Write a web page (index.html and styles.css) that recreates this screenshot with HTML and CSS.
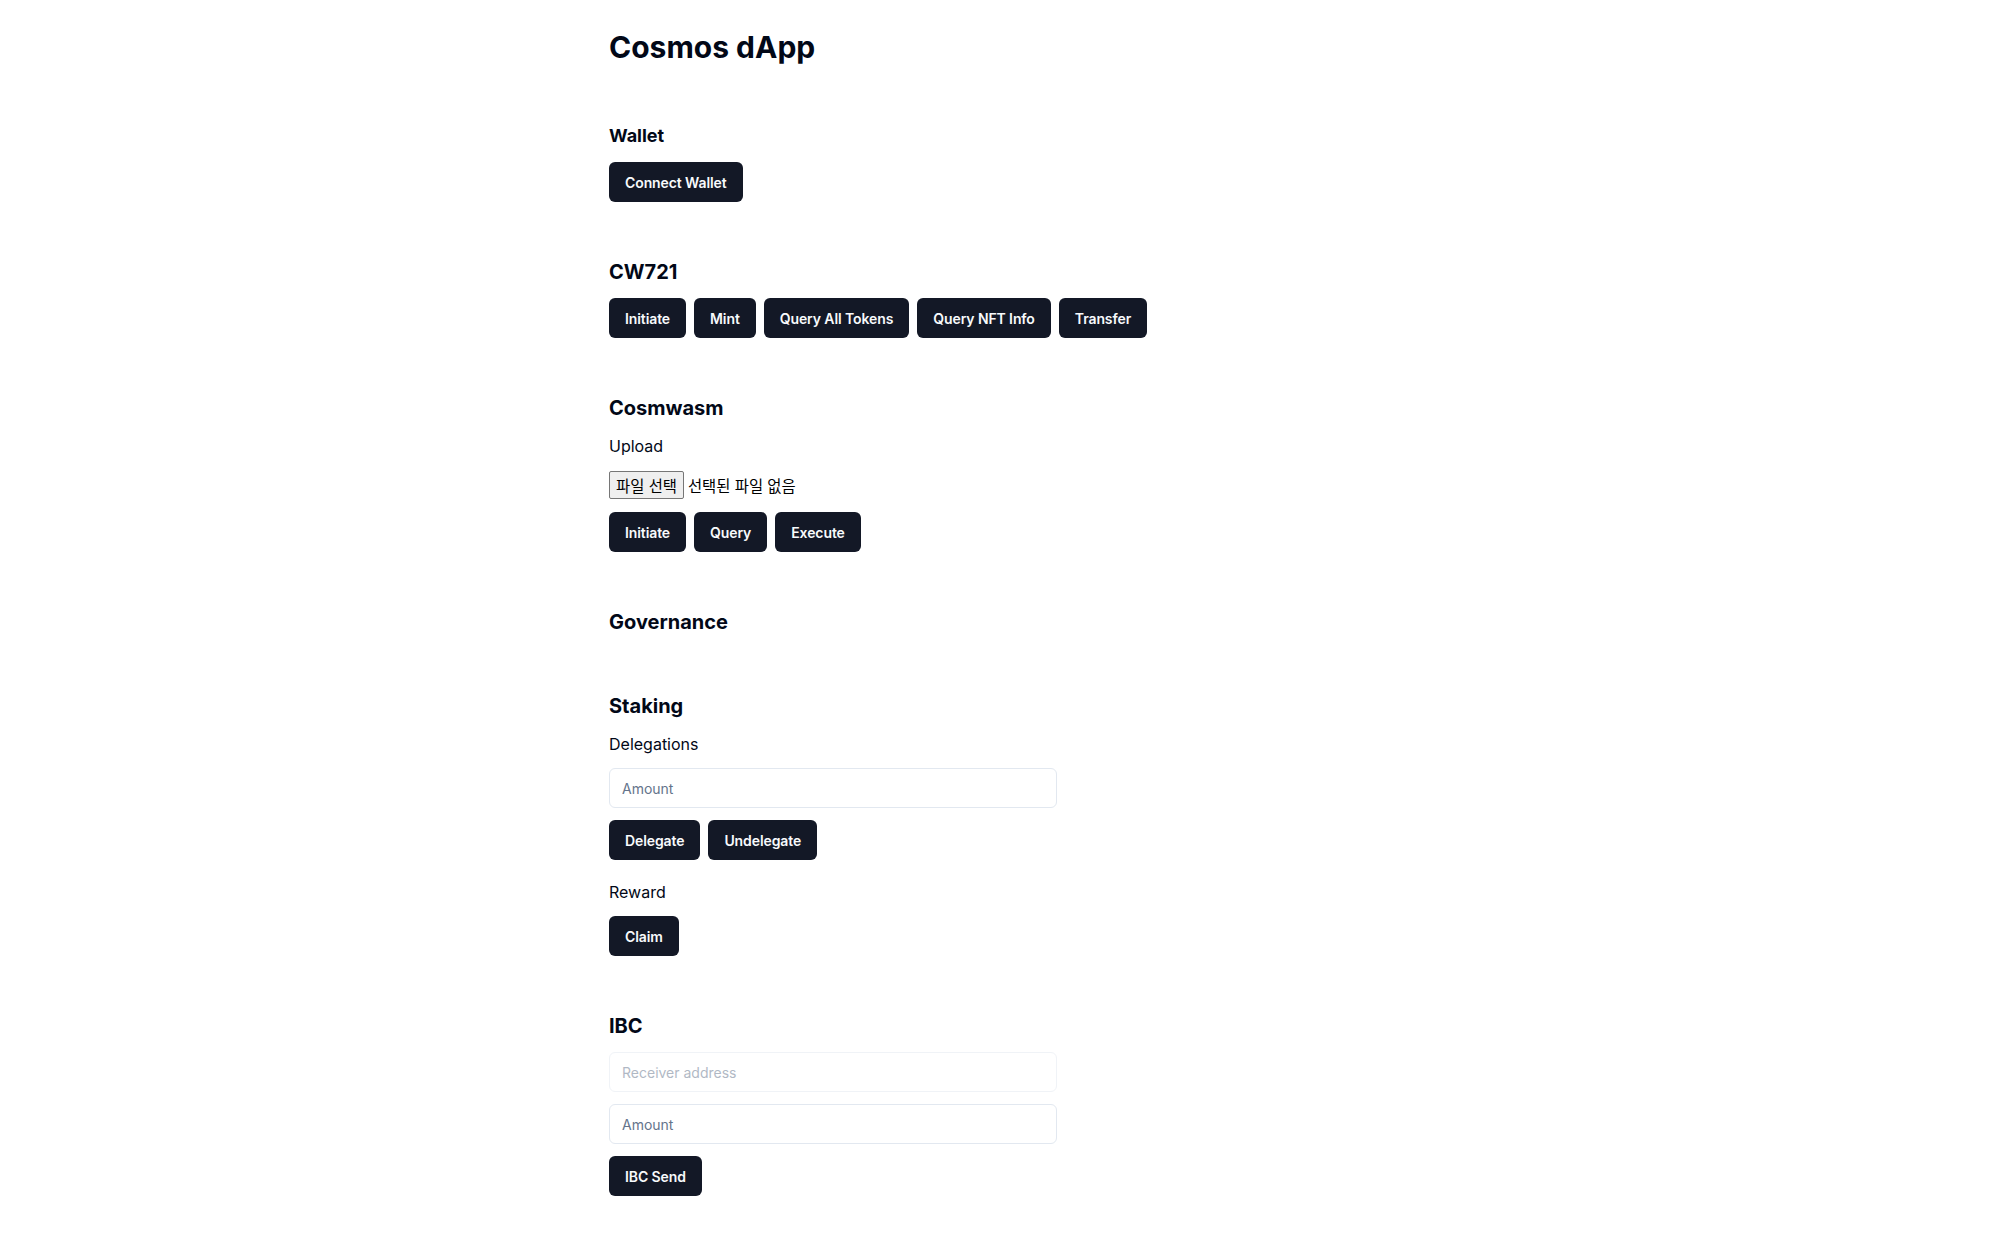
FILE: index.html
```html
<!DOCTYPE html>
<html lang="ko">
<head>
<meta charset="utf-8">
<title>Cosmos dApp</title>
<link rel="stylesheet" href="styles.css">
</head>
<body>
<main class="page">
  <h1 class="title">Cosmos dApp</h1>

  <section class="section">
    <h2 class="heading heading-sm">Wallet</h2>
    <div class="row">
      <button class="btn">Connect Wallet</button>
    </div>
  </section>

  <section class="section">
    <h2 class="heading">CW721</h2>
    <div class="row">
      <button class="btn">Initiate</button>
      <button class="btn">Mint</button>
      <button class="btn">Query All Tokens</button>
      <button class="btn">Query NFT Info</button>
      <button class="btn">Transfer</button>
    </div>
  </section>

  <section class="section">
    <h2 class="heading">Cosmwasm</h2>
    <p class="label">Upload</p>
    <div class="file">
      <span class="file-btn">파일 선택</span>
      <span class="file-name">선택된 파일 없음</span>
    </div>
    <div class="row">
      <button class="btn">Initiate</button>
      <button class="btn">Query</button>
      <button class="btn">Execute</button>
    </div>
  </section>

  <section class="section">
    <h2 class="heading">Governance</h2>
  </section>

  <section class="section">
    <h2 class="heading">Staking</h2>
    <p class="label">Delegations</p>
    <input class="input" type="text" placeholder="Amount">
    <div class="row">
      <button class="btn">Delegate</button>
      <button class="btn">Undelegate</button>
    </div>
    <p class="label label-spaced">Reward</p>
    <div class="row">
      <button class="btn">Claim</button>
    </div>
  </section>

  <section class="section">
    <h2 class="heading">IBC</h2>
    <input class="input input-disabled" type="text" placeholder="Receiver address" disabled>
    <input class="input" type="text" placeholder="Amount">
    <div class="row">
      <button class="btn">IBC Send</button>
    </div>
  </section>
</main>
</body>
</html>
```

FILE: styles.css
```css
* {
  box-sizing: border-box;
}

html, body {
  margin: 0;
  padding: 0;
  background: #ffffff;
}

body {
  font-family: Inter, "Noto Sans", "Noto Sans CJK KR", sans-serif;
  color: #020817;
  font-size: 16px;
  line-height: 24px;
}

.page {
  width: 792px;
  margin: 0 auto;
  padding: 29px 0 40px;
  display: flex;
  flex-direction: column;
  gap: 56px;
}

.title {
  margin: 0 0 1px;
  font-size: 30px;
  line-height: 36px;
  font-weight: 700;
}

.section {
  display: flex;
  flex-direction: column;
  align-items: flex-start;
  gap: 12px;
}

.heading {
  margin: 0;
  font-size: 20px;
  line-height: 28px;
  font-weight: 700;
}

.heading-sm {
  font-size: 18px;
}

.label {
  margin: 0;
  font-size: 16px;
  line-height: 24px;
}

.label-spaced {
  margin-top: 8px;
}

.row {
  display: flex;
  gap: 8px;
}

.btn {
  height: 40px;
  padding: 0 16px;
  border: 0;
  border-radius: 6px;
  background: #131826;
  color: #f8fafc;
  font-family: Inter, sans-serif;
  font-size: 14px;
  font-weight: 600;
  letter-spacing: -0.1px;
  cursor: pointer;
}

.input {
  width: 448px;
  height: 40px;
  padding: 0 12px;
  border: 1px solid #e2e8f0;
  border-radius: 6px;
  background: #ffffff;
  font-family: Inter, sans-serif;
  font-size: 14px;
  color: #020817;
  outline: none;
}

.input::placeholder {
  color: #64748b;
}

.input-disabled {
  opacity: 0.5;
}

.file {
  display: flex;
  align-items: center;
  height: 30px;
  font-family: "Noto Sans CJK KR", sans-serif;
  font-size: 15.4px;
  color: #000000;
}

.file-btn {
  display: inline-flex;
  align-items: center;
  height: 28px;
  padding: 0 6px;
  margin-right: 4px;
  background: #efefef;
  border: 1px solid #767676;
  border-radius: 2px;
}
```
